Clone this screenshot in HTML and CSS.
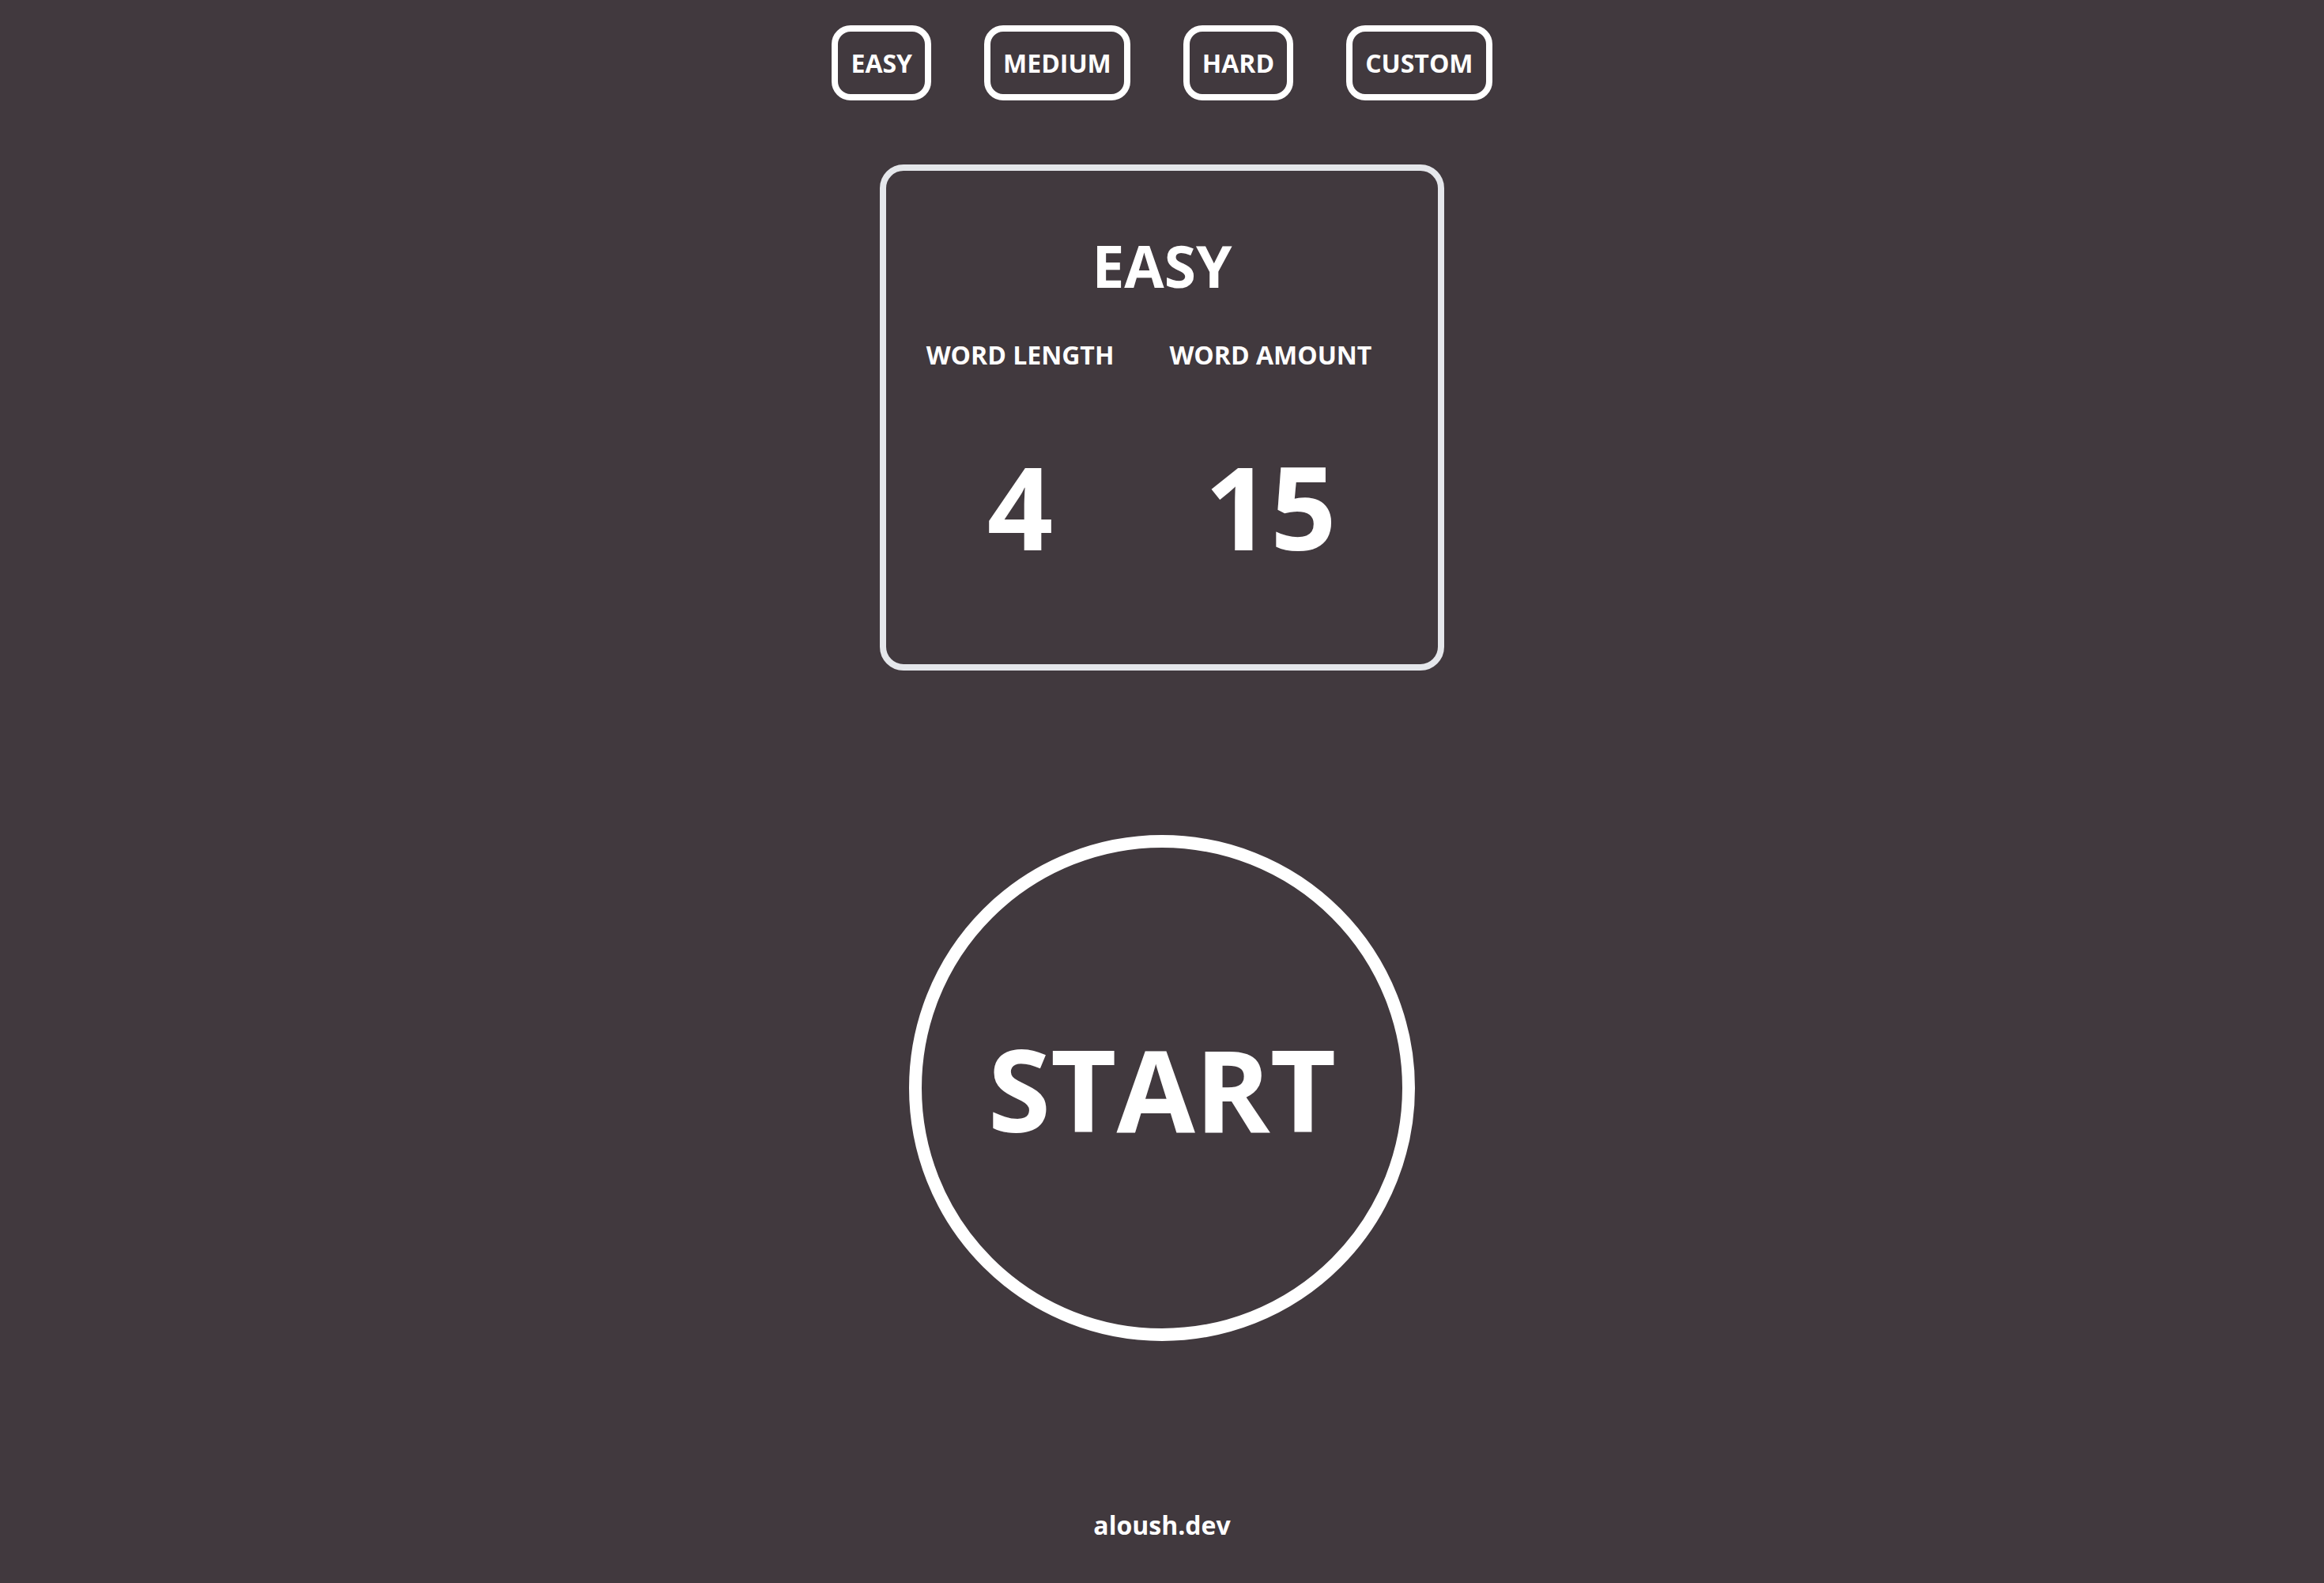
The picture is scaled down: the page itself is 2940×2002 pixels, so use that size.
FILE: index.html
```html
<!DOCTYPE html>
<html lang="en">
<head>
<meta charset="utf-8">
<title>Typing game</title>
<link rel="stylesheet" href="styles.css">
</head>
<body>
<div class="page">
  <nav class="modes">
    <button class="mode">EASY</button>
    <button class="mode">MEDIUM</button>
    <button class="mode">HARD</button>
    <button class="mode">CUSTOM</button>
  </nav>
  <section class="card">
    <h1 class="card-title">EASY</h1>
    <div class="stats">
      <div class="stat">
        <div class="stat-label">WORD LENGTH</div>
        <div class="stat-value">4</div>
      </div>
      <div class="stat">
        <div class="stat-label">WORD AMOUNT</div>
        <div class="stat-value">15</div>
      </div>
    </div>
  </section>
  <button class="start">START</button>
  <footer class="footer">aloush.dev</footer>
</div>
</body>
</html>
```
FILE: styles.css
```css
* { box-sizing: border-box; }
html, body {
  margin: 0;
  padding: 0;
  background: #41393e;
}
body {
  font-family: "Open Sans", "Noto Sans", sans-serif;
  font-weight: 700;
  color: #ffffff;
}
.page {
  min-height: 100vh;
  display: flex;
  flex-direction: column;
  align-items: center;
}
.modes {
  display: flex;
  gap: 67px;
  padding-top: 32px;
}
.mode {
  height: 95px;
  padding: 0 16px;
  border: 8px solid #ffffff;
  border-radius: 24px;
  background: transparent;
  color: #ffffff;
  font-family: inherit;
  font-weight: 700;
  font-size: 32px;
  line-height: 1;
}
.card {
  margin-top: 81px;
  width: 714px;
  height: 640px;
  border: 8px solid #e5e7eb;
  border-radius: 30px;
  padding-top: 83px;
  display: flex;
  flex-direction: column;
  align-items: center;
}
.card-title {
  margin: 0;
  font-size: 73px;
  line-height: 1;
  font-weight: 700;
}
.stats {
  display: flex;
  gap: 70px;
  margin-top: 61px;
  padding-right: 33px;
}
.stat {
  display: flex;
  flex-direction: column;
  align-items: center;
}
.stat-label {
  font-size: 32px;
  line-height: 1;
}
.stat-value {
  margin-top: 102px;
  font-size: 146px;
  line-height: 1;
}
.start {
  margin-top: 208px;
  width: 640px;
  height: 640px;
  border: 16px solid #ffffff;
  border-radius: 50%;
  background: transparent;
  color: #ffffff;
  font-family: inherit;
  font-weight: 700;
  font-size: 144px;
  line-height: 1;
  padding: 0;
}
.footer {
  margin-top: auto;
  padding-bottom: 57px;
  font-size: 32px;
  line-height: 1;
}
```
